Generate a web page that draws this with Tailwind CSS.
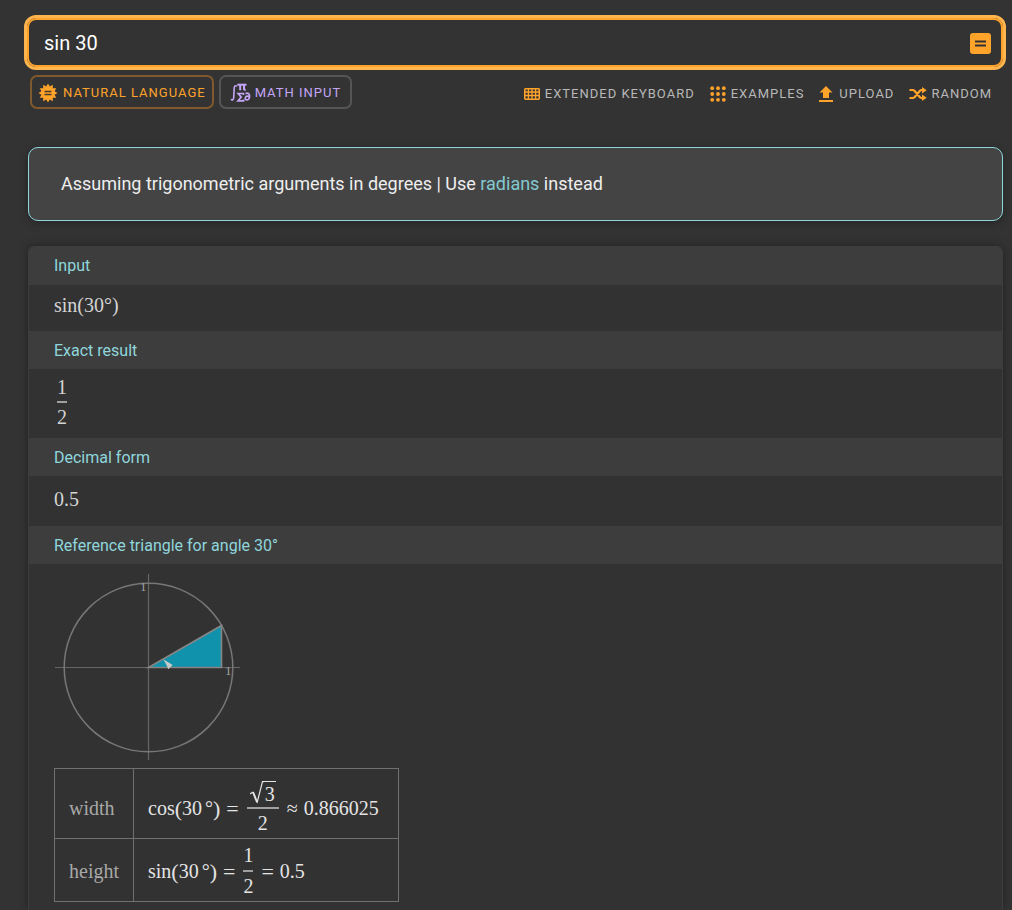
<!DOCTYPE html>
<html lang="en">
<head>
<meta charset="utf-8">
<meta name="viewport" content="width=device-width, initial-scale=1">
<title>sin 30</title>
<script src="https://cdn.jsdelivr.net/npm/@tailwindcss/browser@4"></script>
</head>
<body class="bg-[#333333] font-['Roboto',sans-serif] text-[#eeeeee]">
<main class="flex min-h-screen flex-col pt-[18px] pr-[9px] pl-[28px]">

  <form class="-ml-px flex h-[49px] items-center rounded-[9px] border-2 border-[#ffa32b] pr-[10px] pl-[15px] ring-3 ring-[#ffb54d]">
    <input type="text" value="sin 30" aria-label="Query" class="min-w-0 flex-1 bg-transparent text-[20px] text-white outline-none">
    <button type="button" aria-label="Compute" class="mt-[2px] flex size-[21px] items-center justify-center rounded-[3px] bg-[#ffa32b]">
      <svg class="size-[21px]" viewBox="0 0 21 21" fill="none" stroke="#333" stroke-width="2"><path d="M5 8.5h11M5 12.5h11"/></svg>
    </button>
  </form>

  <div class="mt-2 flex items-center justify-between pr-[11px] pl-[2px] text-[13px] tracking-[1px]">
    <div class="flex gap-[5px]">
      <button type="button" class="flex h-[34px] items-center gap-[5px] rounded-[7px] border-2 border-[#80592c] px-[6px] pt-px text-[#ffa32b]">
        <svg class="size-5" viewBox="0 0 20 20"><polygon fill="#ffa32b" points="19.5,10 16.57,11.76 18.23,14.75 14.81,14.81 14.75,18.23 11.76,16.57 10,19.5 8.24,16.57 5.25,18.23 5.19,14.81 1.77,14.75 3.43,11.76 .5,10 3.43,8.24 1.77,5.25 5.19,5.19 5.25,1.77 8.24,3.43 10,.5 11.76,3.43 14.75,1.77 14.81,5.19 18.23,5.25 16.57,8.24"/><path d="M6.500 8.500h7M6.500 11.500h7" stroke="#4a3a26" stroke-width="1.300"/></svg>
        NATURAL LANGUAGE
      </button>
      <button type="button" class="flex h-[34px] items-center gap-1 rounded-[7px] border-2 border-[#555555] px-[9px] pt-px text-[#c4a5f7]">
        <svg class="h-5 w-[21px]" viewBox="0 0 21 20" fill="none" stroke="#c4a5f7" stroke-width="1.6">
          <path d="M7 3.3Q4.5 1.6 4.2 5L3.7 14.5Q3.4 18 .8 16.3"/>
          <path d="M7.3 1.700h9.200" stroke-width="2"/><path d="M10.200 1.500v5.800M14 1.500v4.500q0 1 1.700.7" stroke-width="2"/>
          <path d="M13.400 11.900v-1.400H8.200l3 3.600-3.200 3.800h5.600v-1.500" stroke-width="1.700"/>
          <path d="M15.500 10.600q3.800-1.400 4 2.200.1 4.100-2.500 4.100-2 0-1.700-2 .4-1.800 2.200-1.800 1.200 0 1.800.9" stroke-width="1.700"/>
        </svg>
        MATH INPUT
      </button>
    </div>
    <nav class="flex items-center gap-[15px] pt-[3px] text-[#b8b8b8]">
      <a href="#" class="flex items-center gap-[5px]">
        <svg class="h-3 w-4" viewBox="0 0 16 12" fill="none" stroke="#ffa32b"><rect x=".75" y=".75" width="14.5" height="10.5" rx=".7" stroke-width="1.500"/><path d="M1 4h14M1 7.500h14M4.400 1v10M8 1v10M11.600 1v10" stroke-width="1.300"/></svg>
        EXTENDED KEYBOARD
      </a>
      <a href="#" class="flex items-center gap-[5px]">
        <svg class="size-4" viewBox="0 0 16 16" fill="#ffa32b"><circle cx="2.2" cy="2.2" r="1.9"/><circle cx="8" cy="2.2" r="1.9"/><circle cx="13.8" cy="2.2" r="1.9"/><circle cx="2.2" cy="8" r="1.9"/><circle cx="8" cy="8" r="1.9"/><circle cx="13.8" cy="8" r="1.9"/><circle cx="2.2" cy="13.8" r="1.9"/><circle cx="8" cy="13.8" r="1.9"/><circle cx="13.8" cy="13.8" r="1.9"/></svg>
        EXAMPLES
      </a>
      <a href="#" class="flex items-center gap-[6px]">
        <svg class="h-4 w-[14px]" viewBox="0 0 14 16" fill="#ffa32b"><path d="M7 0l6.500 6.500H10V12H4V6.500H.5zM0 14h14v2H0z"/></svg>
        UPLOAD
      </a>
      <a href="#" class="flex items-center gap-1">
        <svg class="h-[14px] w-[18px]" viewBox="0 0 18 14"><path d="M.5 3h3.200q1 0 1.800.8l5.200 6.200q.8 1 1.800 1H14M.5 11h3.200q1 0 1.800-.8l5.200-6.200q.8-1 1.800-1H14" fill="none" stroke="#ffa32b" stroke-width="2.200"/><path d="M13 0l4.700 3.200L13 6.600zM13 7.400l4.700 3.400L13 14z" fill="#ffa32b"/></svg>
        RANDOM
      </a>
    </nav>
  </div>

  <section class="mt-[38px] flex h-[74px] items-center rounded-[10px] border border-[#8fd6dc] bg-[#444444] px-8 text-[18px] leading-[24px] shadow-[0_2px_10px_rgba(0,0,0,0.3)]">
    <p>Assuming trigonometric arguments in degrees | Use <a href="#" class="text-[#83c9d1]">radians</a> instead</p>
  </section>

  <div class="mt-[25px] flex-1 overflow-hidden rounded-t-[6px] border border-b-0 border-[#3d3d3d] bg-[#323232] shadow-[0_0_10px_rgba(0,0,0,0.35)]">
    <section>
      <h2 class="h-[38px] bg-[#3d3d3d] pl-[25px] text-[16px] leading-[38px] text-[#8fd6dc]">Input</h2>
      <div class="h-[46px] pl-[25px] font-['Liberation_Serif',serif] text-[20px] leading-[40px] text-[#d4d4d4]">sin(30°)</div>
    </section>
    <section>
      <h2 class="h-[38px] bg-[#3d3d3d] pl-[25px] text-[16px] leading-[40px] text-[#8fd6dc]">Exact result</h2>
      <div class="h-[69px] pt-1 pl-[28px] font-['Liberation_Serif',serif] text-[20px] leading-[28px] text-[#d4d4d4]">
        <span class="inline-flex flex-col items-center"><span class="border-b-2 border-[#a0a0a0]">1</span><span>2</span></span>
      </div>
    </section>
    <section>
      <h2 class="h-[38px] bg-[#3d3d3d] pl-[25px] text-[16px] leading-[40px] text-[#8fd6dc]">Decimal form</h2>
      <div class="h-[50px] pl-[25px] font-['Liberation_Serif',serif] text-[20px] leading-[46px] text-[#d4d4d4]">0.5</div>
    </section>
    <section>
      <h2 class="h-[38px] bg-[#3d3d3d] pl-[25px] text-[16px] leading-[40px] text-[#8fd6dc]">Reference triangle for angle 30°</h2>
      <div class="pt-[10px] pl-[25px] font-['Liberation_Serif',serif] text-[20px]">
        <svg class="block size-[186px]" viewBox="0 0 186 186" font-size="13" fill="#a0a0a0">
          <path d="M1 93.500h185M94.500 0v186" stroke="#666" stroke-width="1.200"/>
          <circle cx="94.500" cy="93.500" r="84.300" fill="none" stroke="#777" stroke-width="1.500"/>
          <path d="M94.500 93.500L167.500 51.500V93.500z" fill="#1192ac" stroke="#858585" stroke-width="1.600"/>
          <path d="M109.300 85.300l9.400 5.700-4.500 4.200-1.300-3.400z" fill="#c8c8c8"/>
          <text x="86" y="17">1</text><text x="171" y="101">1</text>
        </svg>
        <table class="mt-2 mb-[5px] border-collapse leading-[29px]">
          <tbody>
            <tr>
              <th scope="row" class="border border-[#707070] px-[14px] pt-[9px] pb-0 text-left font-normal text-[#a8a8a8]">width</th>
              <td class="border border-[#707070] pt-[9px] pr-[19px] pb-0 pl-[14px] text-[#e4e4e4]">
                <div class="flex items-center whitespace-nowrap">
                  <span>cos</span><span class="text-[22px]">(</span><span>30</span><span class="ml-[3px]">°</span><span class="text-[22px]">)</span>
                  <span class="mx-[6px] text-[22px]">=</span>
                  <span class="mx-[2px] inline-flex flex-col items-center"><span class="flex h-[31px] items-center border-b-2 border-[#a0a0a0] px-[3px]"><svg class="h-[23px] w-[14px]" viewBox="0 0 14 23" fill="none" stroke="#e4e4e4"><path d="M0 13l3-2" stroke-width="1.200"/><path d="M3 11l4 10" stroke-width="2"/><path d="M7 22L12.500.700H14" stroke-width="1.200"/></svg><span class="h-[23px] border-t border-[#e4e4e4] px-px leading-[25px]">3</span></span><span>2</span></span>
                  <span class="mx-[6px]">≈</span><span>0.866025</span>
                </div>
              </td>
            </tr>
            <tr>
              <th scope="row" class="border border-[#707070] px-[14px] pt-[2px] pb-0 text-left font-normal text-[#a8a8a8]">height</th>
              <td class="border border-[#707070] pt-[2px] pr-[19px] pb-0 pl-[14px] text-[#e4e4e4]">
                <div class="flex items-center whitespace-nowrap">
                  <span>sin</span><span class="text-[22px]">(</span><span>30</span><span class="ml-[3px]">°</span><span class="text-[22px]">)</span>
                  <span class="mx-[6px] text-[22px]">=</span>
                  <span class="mx-[2px] inline-flex flex-col items-center"><span class="border-b-2 border-[#a0a0a0]">1</span><span>2</span></span>
                  <span class="mx-[6px] text-[22px]">=</span><span>0.5</span>
                </div>
              </td>
            </tr>
          </tbody>
        </table>
      </div>
    </section>
  </div>
</main>
</body>
</html>
